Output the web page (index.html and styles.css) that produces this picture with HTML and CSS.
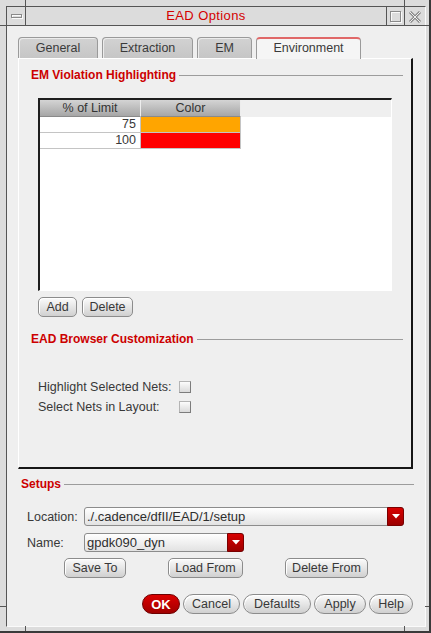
FILE: index.html
```html
<!DOCTYPE html>
<html>
<head>
<meta charset="utf-8">
<title>EAD Options</title>
<link rel="stylesheet" href="styles.css">
</head>
<body>
<div class="frame">
  <div class="win">
    <div class="titlebar">
      <div class="tb-btn tb-min"><span class="min-ico"></span></div>
      <div class="tb-title">EAD Options</div>
      <div class="tb-btn tb-max"><span class="max-ico"></span></div>
      <div class="tb-btn tb-close">
        <svg class="close-ico" width="14" height="12" viewBox="0 0 14 12">
          <path d="M2 1 L12 11 M12 1 L2 11" stroke="#8a8a8a" stroke-width="3" fill="none"/>
          <path d="M2 1 L12 11 M12 1 L2 11" stroke="#eeeeee" stroke-width="1" fill="none"/>
        </svg>
      </div>
    </div>
    <div class="content">
      <div class="tabs">
        <div class="tab tab-general">General</div>
        <div class="tab tab-extraction">Extraction</div>
        <div class="tab tab-em">EM</div>
        <div class="tab tab-env active">Environment</div>
      </div>
      <div class="panel">
        <div class="group-head"><span class="group-title">EM Violation Highlighting</span><i class="rule"></i></div>
        <div class="table">
          <div class="thead">
            <div class="th">% of Limit</div>
            <div class="th">Color</div>
          </div>
          <div class="tr">
            <div class="td num">75</div>
            <div class="td swatch orange"></div>
          </div>
          <div class="tr">
            <div class="td num">100</div>
            <div class="td swatch red"></div>
          </div>
        </div>
        <div class="btn-row">
          <button class="btn w-add">Add</button>
          <button class="btn w-delete">Delete</button>
        </div>
        <div class="group-head group-2"><span class="group-title">EAD Browser Customization</span><i class="rule"></i></div>
        <div class="checks">
          <div class="check-row"><span class="check-label">Highlight Selected Nets:</span><span class="checkbox"></span></div>
          <div class="check-row"><span class="check-label">Select Nets in Layout:</span><span class="checkbox"></span></div>
        </div>
      </div>

      <div class="group-head setups-head"><span class="group-title">Setups</span><i class="rule"></i></div>
      <div class="form-row first">
        <span class="form-label">Location:</span>
        <div class="combo w-loc">
          <span class="combo-text">./.cadence/dfII/EAD/1/setup</span>
          <span class="combo-arrow"><svg width="8" height="5" viewBox="0 0 8 5"><path d="M0 0 H8 L4 4.5 Z" fill="#ffffff"/></svg></span>
        </div>
      </div>
      <div class="form-row">
        <span class="form-label">Name:</span>
        <div class="combo w-name">
          <span class="combo-text">gpdk090_dyn</span>
          <span class="combo-arrow"><svg width="8" height="5" viewBox="0 0 8 5"><path d="M0 0 H8 L4 4.5 Z" fill="#ffffff"/></svg></span>
        </div>
      </div>
      <div class="setup-btns">
        <button class="btn w-save">Save To</button>
        <button class="btn w-load">Load From</button>
        <button class="btn w-delfrom">Delete From</button>
      </div>
      <div class="footer">
        <button class="pill ok w-ok">OK</button>
        <button class="pill w-cancel">Cancel</button>
        <button class="pill w-defaults">Defaults</button>
        <button class="pill w-apply">Apply</button>
        <button class="pill w-help">Help</button>
      </div>
    </div>
  </div>
  <i class="tick tick-v tv-tl"></i>
  <i class="tick tick-v tv-tr"></i>
  <i class="tick tick-v tv-bl"></i>
  <i class="tick tick-v tv-br"></i>
  <i class="tick tick-h th-lt"></i>
  <i class="tick tick-h th-lb"></i>
  <i class="tick tick-h th-rt"></i>
  <i class="tick tick-h th-rb"></i>
</div>
</body>
</html>
```

FILE: styles.css
```css
* { box-sizing: border-box; }
html, body { margin: 0; padding: 0; }
body {
  background: #dcdcdc;
  font-family: "Liberation Sans", Arial, sans-serif;
  font-size: 12.5px;
  color: #383838;
  overflow: hidden;
}

.frame {
  position: relative;
  width: 431px;
  height: 633px;
  background: #dcdcdc;
  border-right: 2px solid #3a3a3a;
  border-bottom: 2px solid #3a3a3a;
  padding: 6px 3px 4px 6px;
}

.win {
  height: 100%;
  border-top: 1px solid #555;
  border-left: 1px solid #555;
  border-right: 1px solid #fafafa;
  border-bottom: 1px solid #fafafa;
  display: flex;
  flex-direction: column;
}

/* title bar */
.titlebar {
  display: flex;
  height: 19px;
  border-bottom: 1px solid #555;
  background: #dcdcdc;
}
.tb-btn { height: 18px; position: relative; }
.tb-min { width: 19px; border-right: 1px solid #555; }
.tb-title {
  flex: 1;
  text-align: center;
  color: #d40000;
  font-size: 13px;
  letter-spacing: 0.4px;
  line-height: 18px;
}
.tb-max { width: 18px; border-left: 1px solid #555; }
.tb-close { width: 21px; border-left: 1px solid #555; }
.min-ico {
  position: absolute;
  left: 4px; top: 7px;
  width: 11px; height: 4px;
  border: 1px solid #8a8a8a;
  box-shadow: inset 1px 1px 0 #fafafa, 1px 1px 0 #fafafa;
}
.max-ico {
  position: absolute;
  left: 3px; top: 4px;
  width: 11px; height: 11px;
  border: 1px solid #8a8a8a;
  box-shadow: inset 1px 1px 0 #fafafa, 1px 1px 0 #fafafa;
}
.close-ico { position: absolute; left: 3px; top: 4px; }

/* frame ticks */
.tick { position: absolute; background: #555; display: block; }
.tick-v { width: 1px; height: 6px; }
.tick-h { height: 1px; width: 6px; }
.tv-tl { left: 25px; top: 0; }
.tv-tr { left: 404px; top: 0; }
.tv-bl { left: 25px; top: 626px; height: 5px; }
.tv-br { left: 404px; top: 626px; height: 5px; }
.th-lt { left: 0; top: 25px; }
.th-lb { left: 0; top: 606px; }
.th-rt { left: 425px; top: 25px; width: 4px; }
.th-rb { left: 425px; top: 606px; width: 4px; }

/* content */
.content {
  flex: 1;
  background: #efefef;
  padding: 11px 12px 0 11px;
}

.tabs {
  display: flex;
  align-items: flex-end;
  gap: 4px;
  height: 21px;
}
.tab {
  height: 21px;
  line-height: 20px;
  text-align: center;
  background: linear-gradient(#d2d2d2, #c6c6c6);
  border: 1px solid #9a9a9a;
  border-bottom: 0;
  border-radius: 4px 4px 0 0;
  box-shadow: inset 1px 1px 0 #ececec;
  color: #3a3a3a;
}
.tab-general { width: 80px; }
.tab-extraction { width: 91px; }
.tab-em { width: 55px; }
.tab-env { width: 105px; }
.tab.active {
  height: 22px;
  margin-bottom: -1px;
  position: relative;
  z-index: 1;
  background: #f5f5f5;
  border-top: 2px solid #e06868;
  box-shadow: none;
  line-height: 19px;
}

.panel {
  height: 411px;
  background: #efefef;
  border-top: 1px solid #ffffff;
  border-left: 1px solid #ffffff;
  border-right: 2px solid #161616;
  border-bottom: 2px solid #161616;
  padding: 9px 8px 0 12px;
}

.group-head {
  display: flex;
  align-items: center;
  height: 14px;
}
.group-title {
  color: #cc0000;
  font-weight: bold;
  font-size: 12px;
  white-space: nowrap;
}
.rule {
  flex: 1;
  border-top: 1px solid #9c9c9c;
  margin-left: 3px;
  display: block;
}

/* table */
.table {
  margin: 16px 0 0 7px;
  width: 354px;
  height: 193px;
  background: #ffffff;
  border-style: solid;
  border-width: 2px 1px 1px 2px;
  border-color: #1e1e1e #ffffff #ffffff #1e1e1e;
}
.thead {
  display: flex;
  background: #efefef;
  height: 17px;
}
.th {
  width: 101px;
  height: 17px;
  line-height: 16px;
  text-align: center;
  background: linear-gradient(#d4d4d4, #a6a6a6);
  border-right: 1px solid #ededed;
  border-bottom: 1px solid #8a8a8a;
  color: #333;
}
.th + .th { width: 100px; }
.tr { display: flex; height: 16px; }
.td {
  width: 101px;
  height: 16px;
  border-right: 1px solid #c4c4c4;
  border-bottom: 1px solid #c4c4c4;
  line-height: 15px;
}
.td + .td { width: 100px; }
.num { text-align: right; padding-right: 4px; }
.orange { background: #ffa500; }
.red { background: #ff0000; }

/* buttons */
.btn {
  font-family: inherit;
  font-size: 12.5px;
  color: #383838;
  height: 20px;
  padding: 0;
  border: 1px solid #8c8c8c;
  border-radius: 5px;
  background: linear-gradient(#fbfbfb, #d0d0d0);
  box-shadow: inset 1px 1px 0 #ffffff;
  line-height: 17px;
}
.btn-row {
  display: flex;
  gap: 5px;
  margin: 6px 0 0 7px;
}
.w-add { width: 39px; }
.w-delete { width: 51px; }

.group-2 { margin-top: 15px; }

.checks { margin: 31px 0 0 7px; }
.check-row {
  display: flex;
  align-items: center;
  height: 20px;
}
.check-label { width: 141px; }
.checkbox {
  width: 12px;
  height: 12px;
  border: 1px solid;
  border-color: #b4b4b4 #7c7c7c #7c7c7c #b4b4b4;
  background: linear-gradient(#fcfcfc, #dadada);
}

/* setups */
.setups-head { margin: 8px -1px 0 3px; }
.form-row {
  display: flex;
  align-items: center;
  height: 19px;
  margin: 7px 0 0 9px;
}
.form-row.first { margin-top: 16px; }
.form-label { width: 57px; }
.combo {
  display: flex;
  height: 19px;
  border: 1px solid #8c8c8c;
  border-radius: 3px;
  background: linear-gradient(#ffffff, #e2e2e2);
}
.w-loc { width: 320px; }
.w-name { width: 160px; }
.combo-text {
  flex: 1;
  font-size: 13px;
  line-height: 17px;
  padding-left: 2px;
  color: #2e2e2e;
}
.combo-arrow {
  width: 17px;
  margin: -1px -1px -1px 0;
  border: 1px solid #7a0000;
  border-radius: 0 3px 3px 0;
  background: linear-gradient(#d80000, #9c0000);
  display: flex;
  align-items: center;
  justify-content: center;
}

.setup-btns {
  display: flex;
  justify-content: center;
  gap: 42px;
  margin-top: 6px;
  padding-left: 1px;
}
.w-save { width: 62px; }
.w-load { width: 75px; }
.w-delfrom { width: 83px; }

.footer {
  display: flex;
  justify-content: flex-end;
  gap: 3px;
  margin-top: 16px;
}
.pill {
  font-family: inherit;
  font-size: 12.5px;
  color: #383838;
  height: 20px;
  padding: 0;
  border: 1px solid #8c8c8c;
  border-radius: 10px;
  background: linear-gradient(#fbfbfb, #d0d0d0);
  box-shadow: inset 1px 1px 0 #ffffff;
  line-height: 17px;
}
.pill.ok {
  color: #ffffff;
  font-weight: bold;
  font-size: 13px;
  border-color: #6e0000;
  background: linear-gradient(#dc0000, #a00000);
  box-shadow: none;
}
.w-ok { width: 38px; }
.w-cancel { width: 57px; }
.w-defaults { width: 68px; }
.w-apply { width: 52px; }
.w-help { width: 44px; }
```
